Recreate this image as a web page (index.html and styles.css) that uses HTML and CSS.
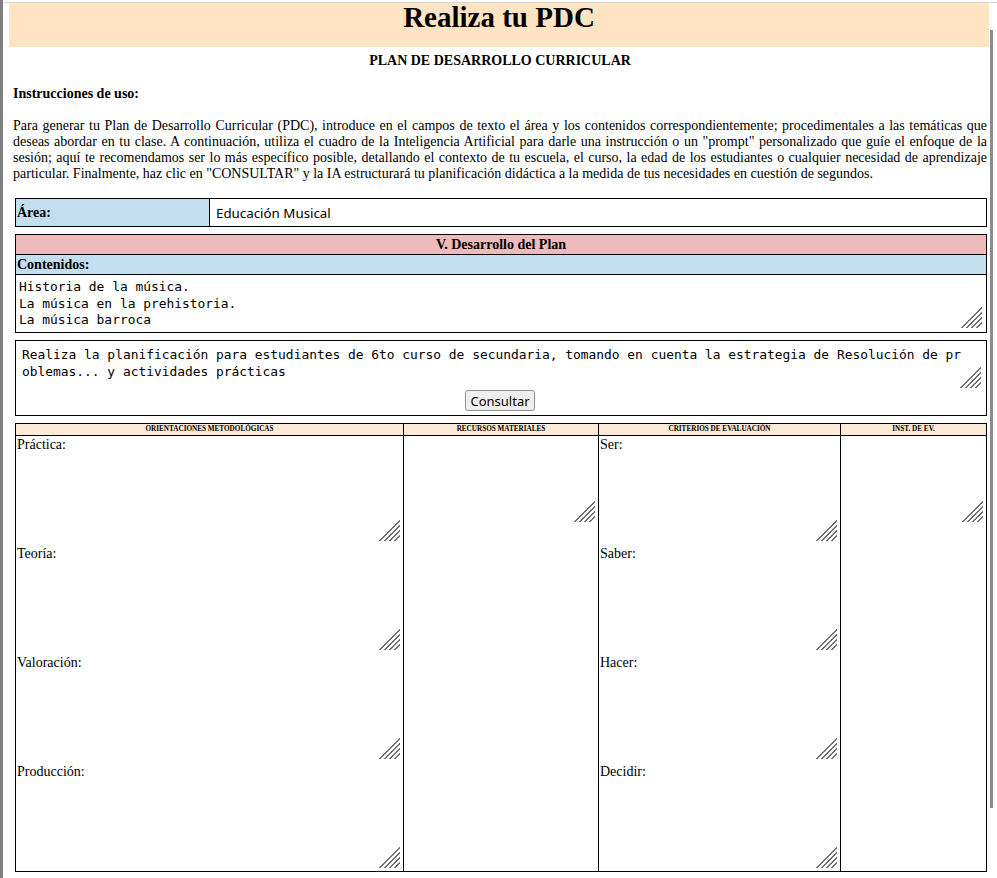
FILE: index.html
```html
<!DOCTYPE html>
<html lang="es">
<head>
    <meta charset="UTF-8">
    <meta name="viewport" content="width=device-width, initial-scale=1.0">
    <title>Realiza tu PDC</title>
    <link rel="stylesheet" href="styles.css">
</head>
<body>
    <div class="window">
        <div class="frame-edge"></div>
        <div class="viewport">
            <div class="page">
                <h1 class="page-title">Realiza tu PDC</h1>

                <main class="main-content">
                    <h2 class="subtitle">PLAN DE DESARROLLO CURRICULAR</h2>
                    <p class="instructions-title">Instrucciones de uso:</p>
                    <p class="instructions">Para generar tu Plan de Desarrollo Curricular (PDC), introduce en el campos de texto el área y los contenidos correspondientemente; procedimentales a las temáticas que deseas abordar en tu clase. A continuación, utiliza el cuadro de la Inteligencia Artificial para darle una instrucción o un "prompt" personalizado que guíe el enfoque de la sesión; aquí te recomendamos ser lo más específico posible, detallando el contexto de tu escuela, el curso, la edad de los estudiantes o cualquier necesidad de aprendizaje particular. Finalmente, haz clic en "CONSULTAR" y la IA estructurará tu planificación didáctica a la medida de tus necesidades en cuestión de segundos.</p>

                    <div class="area-box">
                        <div class="area-label">Área:</div>
                        <input type="text" class="area-input" value="Educación Musical">
                    </div>

                    <div class="plan-box">
                        <div class="plan-head">V. Desarrollo del Plan</div>
                        <div class="plan-sub">Contenidos:</div>
                        <textarea class="contents-input">Historia de la música.
La música en la prehistoria.
La música barroca</textarea>
                    </div>

                    <div class="prompt-box">
                        <textarea class="prompt-input">Realiza la planificación para estudiantes de 6to curso de secundaria, tomando en cuenta la estrategia de Resolución de pr
oblemas... y actividades prácticas</textarea>
                        <button type="button" class="consult-btn">Consultar</button>
                    </div>

                    <div class="plan-grid">
                        <div class="grid-head">Orientaciones metodológicas</div>
                        <div class="grid-head">Recursos materiales</div>
                        <div class="grid-head">Criterios de evaluación</div>
                        <div class="grid-head">Inst. de Ev.</div>

                        <div class="grid-cell">
                            <label class="field-label">Práctica:</label>
                            <textarea class="field-input"></textarea>
                            <label class="field-label">Teoría:</label>
                            <textarea class="field-input"></textarea>
                            <label class="field-label">Valoración:</label>
                            <textarea class="field-input"></textarea>
                            <label class="field-label">Producción:</label>
                            <textarea class="field-input"></textarea>
                        </div>
                        <div class="grid-cell">
                            <textarea class="field-input short"></textarea>
                        </div>
                        <div class="grid-cell">
                            <label class="field-label">Ser:</label>
                            <textarea class="field-input"></textarea>
                            <label class="field-label">Saber:</label>
                            <textarea class="field-input"></textarea>
                            <label class="field-label">Hacer:</label>
                            <textarea class="field-input"></textarea>
                            <label class="field-label">Decidir:</label>
                            <textarea class="field-input"></textarea>
                        </div>
                        <div class="grid-cell">
                            <textarea class="field-input short"></textarea>
                        </div>
                    </div>
                </main>
            </div>
            <div class="scroll-track"><div class="scroll-thumb"></div></div>
        </div>
    </div>
</body>
</html>
```

FILE: styles.css
```css
/* Base */
* {
    margin: 0;
    padding: 0;
    box-sizing: border-box;
}

body {
    background: #ffffff;
    color: #000000;
    font-family: 'Liberation Serif', 'Times New Roman', serif;
    font-size: 14px;
    line-height: 16px;
    overflow: hidden;
}

/* Window frame */
.window {
    display: flex;
    width: 997px;
    height: 878px;
    overflow: hidden;
}

.frame-edge {
    width: 3px;
    background: #7f7f7f;
    flex-shrink: 0;
}

.viewport {
    display: flex;
    flex: 1;
    margin-top: 2px;
    border-top: 1px solid #d4d4d4;
}

.page {
    width: 986px;
    flex-shrink: 0;
}

.scroll-track {
    width: 8px;
    flex-shrink: 0;
}

.scroll-thumb {
    width: 3px;
    height: 778px;
    margin: 27px 0 0 1px;
    background: #8c8c8c;
}

/* Header */
.page-title {
    margin-left: 6px;
    padding-bottom: 15px;
    background: #ffe4c4;
    font-size: 29px;
    line-height: 29px;
    font-weight: 700;
    text-align: center;
}

.main-content {
    padding: 0 2px 0 10px;
}

.subtitle {
    margin-top: 6px;
    font-size: 14px;
    font-weight: 700;
    text-align: center;
}

.instructions-title {
    margin-top: 17px;
    font-weight: 700;
}

.instructions {
    margin-top: 16px;
    text-align: justify;
}

/* Area row */
.area-box {
    display: grid;
    grid-template-columns: 194px 1fr;
    height: 29px;
    margin: 16px 0 0 2px;
    border: 1px solid #000;
}

.area-label {
    display: flex;
    align-items: center;
    padding-left: 1px;
    background: #c3deef;
    border-right: 1px solid #000;
    font-weight: 700;
}

.area-input {
    border: none;
    outline: none;
    padding: 0 6px;
    font-family: 'Noto Sans', 'Open Sans', sans-serif;
    font-size: 13.33px;
    color: #000;
}

/* Plan section */
.plan-box {
    margin: 7px 0 0 2px;
    border: 1px solid #000;
}

.plan-head {
    height: 20px;
    line-height: 19px;
    background: #edbbbb;
    border-bottom: 1px solid #000;
    font-weight: 700;
    text-align: center;
}

.plan-sub {
    height: 20px;
    line-height: 19px;
    padding-left: 1px;
    background: #c3deef;
    border-bottom: 1px solid #000;
    font-weight: 700;
}

/* textareas draw their own corner grip */
textarea {
    display: block;
    width: 100%;
    border: none;
    outline: none;
    resize: none;
    font-family: 'DejaVu Sans Mono', monospace;
    font-size: 12.9px;
    color: #000;
    background-color: #fff;
    background-image: linear-gradient(135deg,
        transparent 14.2px, #707070 14.2px, #707070 15.8px,
        transparent 15.8px, transparent 17.8px, #707070 17.8px, #707070 19.4px,
        transparent 19.4px, transparent 21.4px, #707070 21.4px, #707070 23px,
        transparent 23px, transparent 25px, #707070 25px, #707070 26.6px,
        transparent 26.6px);
    background-size: 21px 21px;
    background-repeat: no-repeat;
    background-position: right 2px bottom 1px;
}

.contents-input {
    height: 57px;
    padding: 4px 3px 0;
    line-height: 16.5px;
    background-position: right 4px bottom 4px;
}

/* Prompt */
.prompt-box {
    margin: 7px 0 0 2px;
    padding: 2px 3px 4px 1px;
    border: 1px solid #000;
}

.prompt-input {
    height: 46px;
    padding: 4px 5px 0;
    line-height: 16.7px;
    white-space: pre;
    overflow: hidden;
}

.consult-btn {
    display: block;
    margin: 1px auto 0;
    height: 21px;
    padding: 0 4px;
    background: #efefef;
    border: 1px solid #8f8f8f;
    border-radius: 3px;
    font-family: 'Noto Sans', 'Open Sans', sans-serif;
    font-size: 13px;
    color: #000;
}

/* Bottom grid */
.plan-grid {
    display: grid;
    grid-template-columns: 387px 194px 241px 1fr;
    gap: 1px;
    margin: 7px 0 0 2px;
    background: #000;
    border: 1px solid #000;
}

.grid-head {
    height: 11px;
    line-height: 11px;
    background: #fcead6;
    font-size: 7.2px;
    font-weight: 700;
    text-align: center;
    text-transform: uppercase;
}

.grid-cell {
    padding: 1px 1px 2px;
    background: #fff;
}

.field-label {
    display: block;
    height: 16px;
}

.field-input {
    height: 89px;
    margin-bottom: 4px;
    padding: 2px;
}

.field-input:last-child {
    margin-bottom: 0;
}

.field-input.short {
    height: 86px;
}
```
